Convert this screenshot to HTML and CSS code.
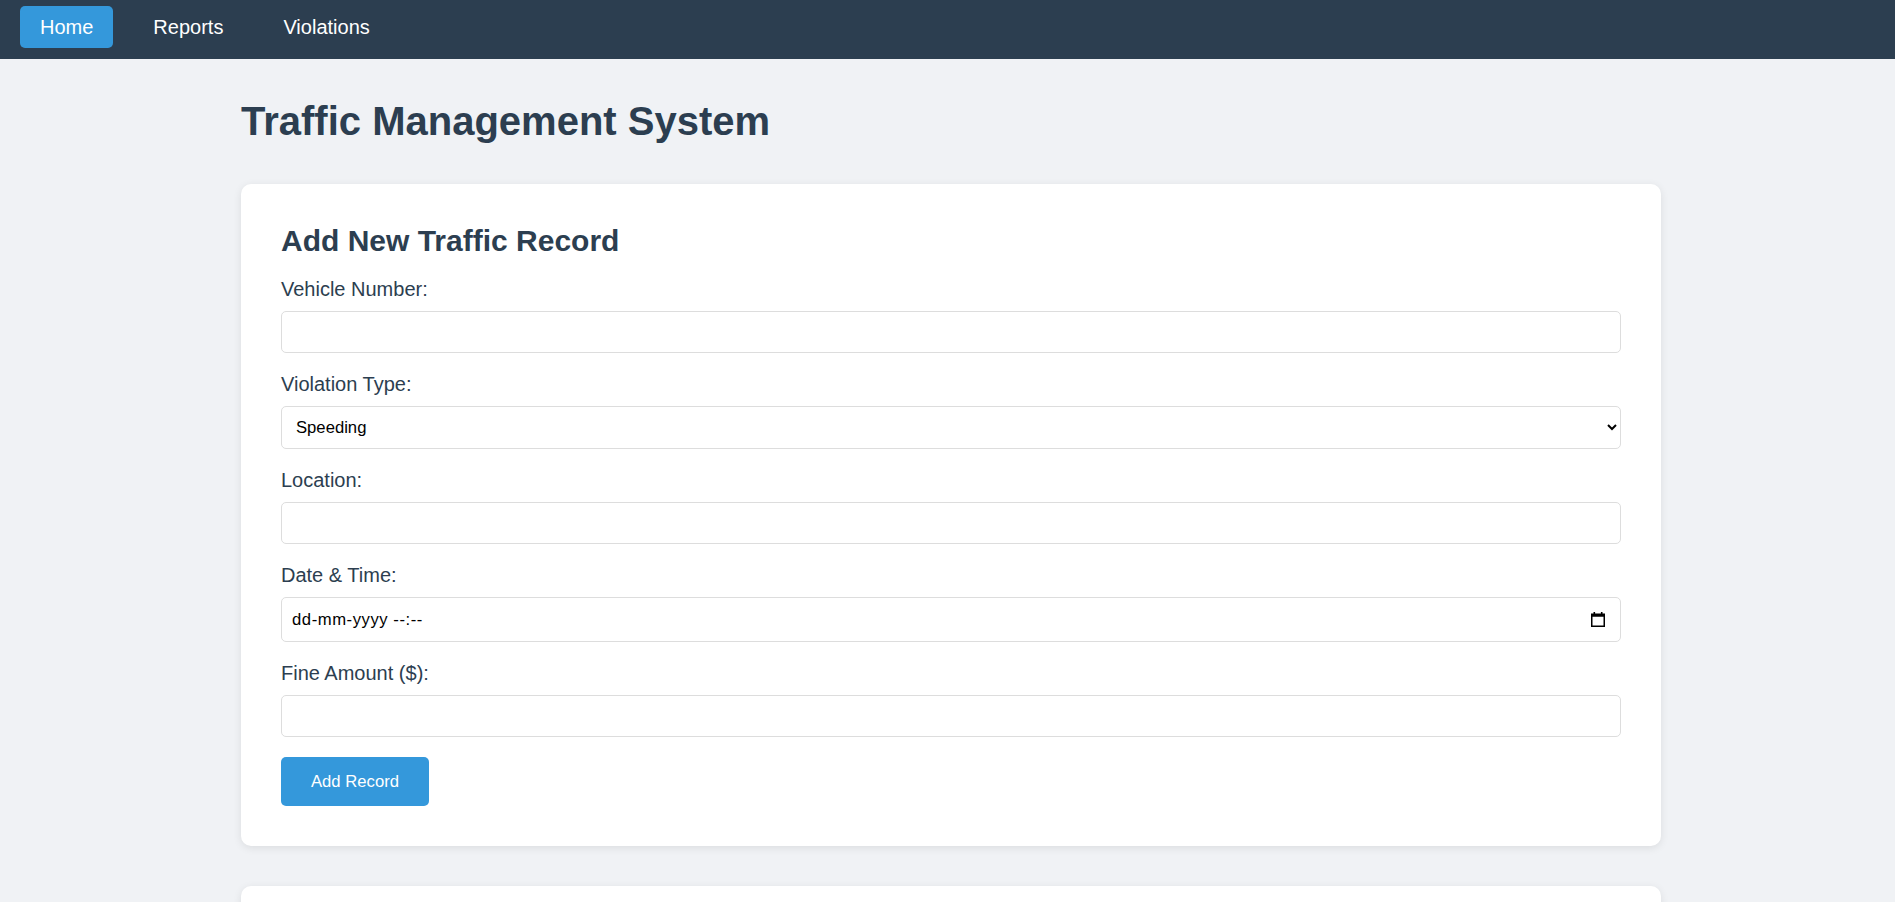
FILE: index.html
```html
<!DOCTYPE html>
<html lang="en">
<head>
<meta charset="utf-8">
<title>Traffic Management System</title>
<link rel="stylesheet" href="styles.css">
</head>
<body>
<nav class="navbar">
  <a href="#" class="nav-link active">Home</a>
  <a href="#" class="nav-link">Reports</a>
  <a href="#" class="nav-link">Violations</a>
</nav>
<main class="container">
  <h1 class="page-title">Traffic Management System</h1>
  <section class="card">
    <h2 class="card-title">Add New Traffic Record</h2>
    <form class="record-form">
      <div class="form-group">
        <label class="form-label" for="vehicle">Vehicle Number:</label>
        <input class="form-control" type="text" id="vehicle">
      </div>
      <div class="form-group">
        <label class="form-label" for="violation">Violation Type:</label>
        <select class="form-control form-select" id="violation">
          <option>Speeding</option>
          <option>Red Light</option>
          <option>Illegal Parking</option>
          <option>No Helmet</option>
        </select>
      </div>
      <div class="form-group">
        <label class="form-label" for="location">Location:</label>
        <input class="form-control" type="text" id="location">
      </div>
      <div class="form-group">
        <label class="form-label" for="datetime">Date &amp; Time:</label>
        <div class="date-wrap">
          <input class="form-control form-date" type="text" id="datetime" placeholder="dd-mm-yyyy --:--">
          <svg class="date-icon" width="14" height="15" viewBox="0 0 14 15" aria-hidden="true">
            <rect x="2.5" y="0" width="1.6" height="3" fill="#000"/>
            <rect x="9.9" y="0" width="1.6" height="3" fill="#000"/>
            <rect x="0.75" y="2.25" width="12.5" height="12" fill="none" stroke="#000" stroke-width="1.5"/>
            <rect x="0.75" y="2.25" width="12.5" height="2.5" fill="#000"/>
          </svg>
        </div>
      </div>
      <div class="form-group">
        <label class="form-label" for="fine">Fine Amount ($):</label>
        <input class="form-control" type="number" id="fine">
      </div>
      <button type="button" class="btn-primary">Add Record</button>
    </form>
  </section>
  <section class="card card-empty"></section>
</main>
</body>
</html>
```
FILE: styles.css
```css
* {
  box-sizing: border-box;
}

body {
  margin: 0;
  background: #f0f2f5;
  font-family: "Liberation Sans", Arial, sans-serif;
  color: #2c3e50;
}

.navbar {
  display: flex;
  align-items: flex-start;
  gap: 20px;
  height: 59px;
  padding: 6px 20px 0;
  background: #2c3e50;
}

.nav-link {
  display: block;
  padding: 10px 20px;
  border-radius: 5px;
  color: #ffffff;
  text-decoration: none;
  font-size: 20px;
  line-height: 22px;
}

.nav-link.active {
  background: #3498db;
}

.container {
  width: 1420px;
  margin: 0 0 0 241px;
}

.page-title {
  margin: 40px 0 40px;
  font-size: 40px;
  line-height: 45px;
  font-weight: bold;
  color: #2c3e50;
}

.card {
  background: #ffffff;
  border-radius: 10px;
  padding: 40px;
  margin-bottom: 40px;
  box-shadow: 0 2px 8px rgba(0, 0, 0, 0.09);
}

.card-empty {
  min-height: 240px;
}

.card-title {
  margin: 0 0 20px;
  font-size: 30px;
  line-height: 34px;
  font-weight: bold;
  color: #2c3e50;
}

.form-group {
  margin-bottom: 20px;
}

.form-label {
  display: block;
  margin-bottom: 10px;
  font-size: 20px;
  line-height: 23px;
  color: #2c3e50;
}

.form-control {
  display: block;
  width: 100%;
  height: 42px;
  padding: 10px;
  border: 1px solid #dddddd;
  border-radius: 5px;
  background: #ffffff;
  font-family: "Liberation Sans", Arial, sans-serif;
  font-size: 16.67px;
  color: #000000;
}

.form-select {
  height: 43px;
}

.date-wrap {
  position: relative;
}

.form-date {
  height: 45px;
  letter-spacing: 0.55px;
}

.form-date::placeholder {
  color: #000000;
  opacity: 1;
}

.date-icon {
  position: absolute;
  top: 15px;
  right: 16px;
}

.btn-primary {
  display: block;
  padding: 15px 30px;
  border: none;
  border-radius: 5px;
  background: #3498db;
  color: #ffffff;
  font-family: "Liberation Sans", Arial, sans-serif;
  font-size: 16.67px;
  line-height: 19px;
  cursor: pointer;
}
```
